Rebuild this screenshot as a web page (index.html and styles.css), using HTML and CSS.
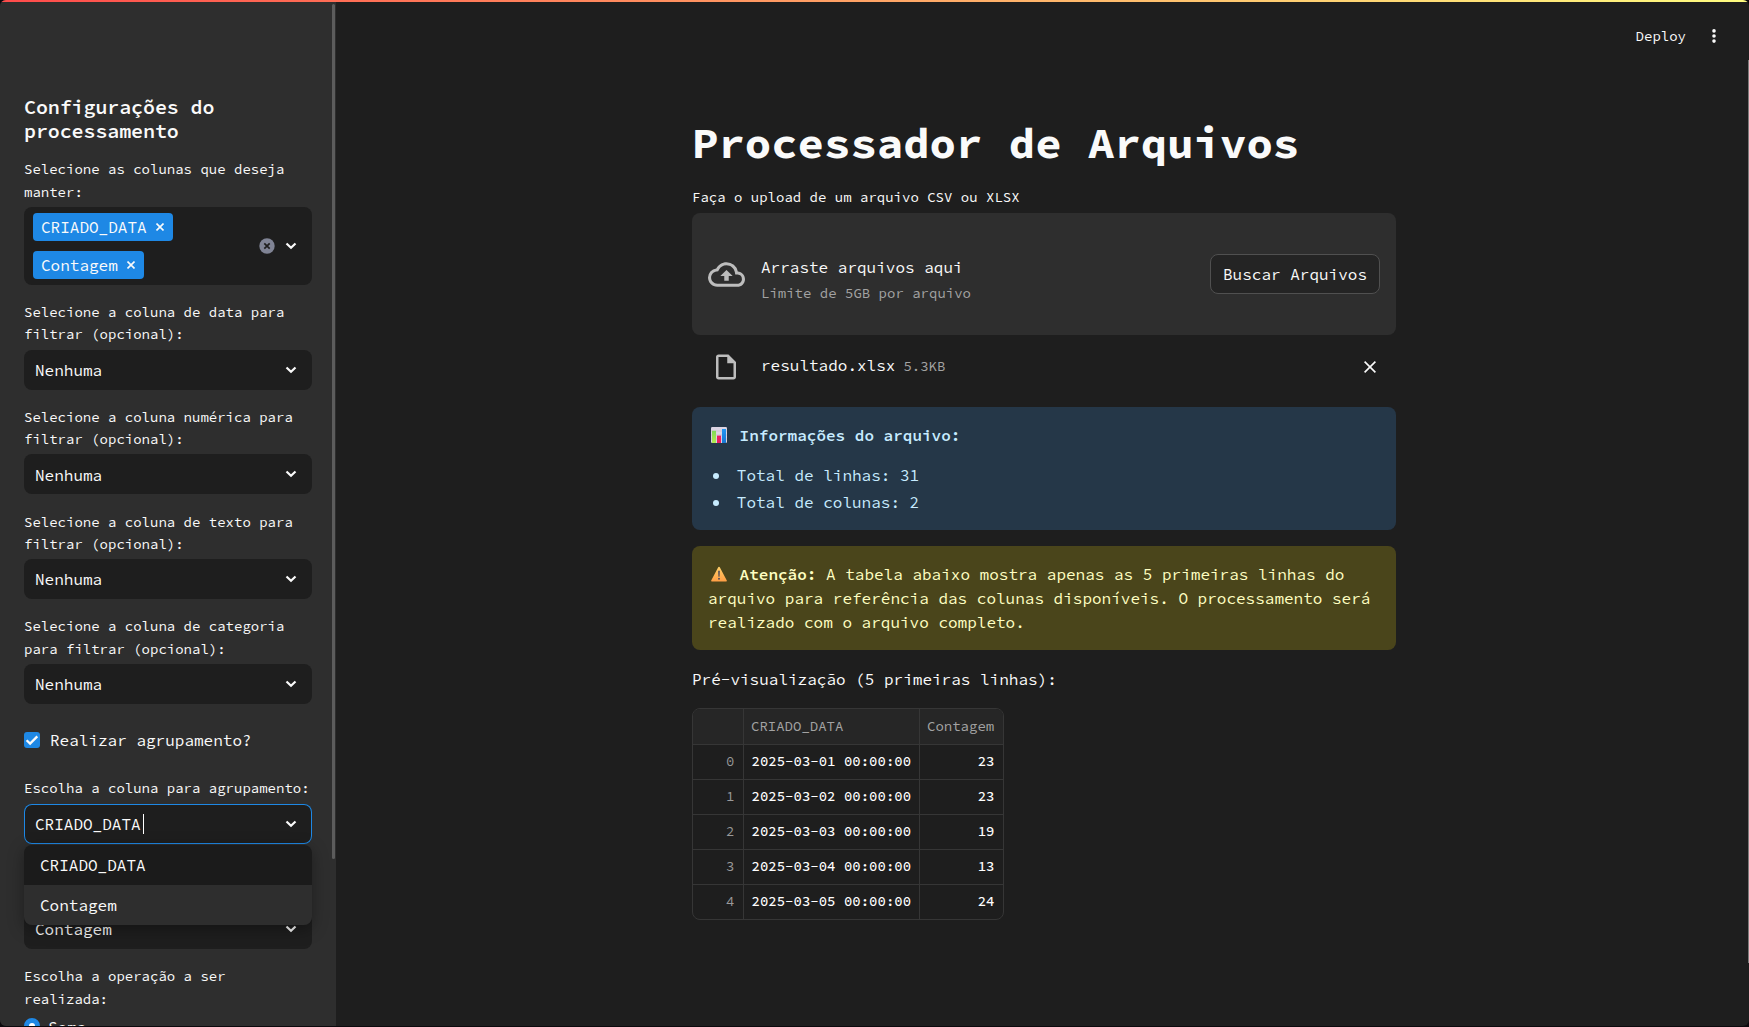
FILE: index.html
```html
<!DOCTYPE html>
<html lang="pt-BR">
<head>
<meta charset="utf-8">
<title>Processador de Arquivos</title>
<link rel="stylesheet" href="styles.css">
</head>
<body>
<svg width="0" height="0" class="defs">
  <symbol id="chevron" viewBox="0 0 12 8"><path d="M1.5 1.5 6 5.8 10.5 1.5" fill="none" stroke="currentColor" stroke-width="2.2"/></symbol>
  <symbol id="cross" viewBox="0 0 8 8"><path d="M.5.5 7.5 7.5M7.5.5.5 7.5" fill="none" stroke="currentColor" stroke-width="1.6"/></symbol>
</svg>
<div class="app">
  <div class="decoration"></div>
  <aside class="sidebar">
    <div class="side-scroll"></div>
    <h2>Configurações do processamento</h2>
    <div class="field">
      <label>Selecione as colunas que deseja manter:</label>
      <div class="multi">
        <div class="tags">
          <span class="tag">CRIADO_DATA<svg><use href="#cross"/></svg></span>
          <span class="tag">Contagem<svg><use href="#cross"/></svg></span>
        </div>
        <svg class="clear" viewBox="0 0 16 16"><circle cx="8" cy="8" r="7.7" fill="#808495"/><path d="M5.3 5.3l5.4 5.4M10.7 5.3l-5.4 5.4" stroke="#1e1e1e" stroke-width="1.7"/></svg>
        <svg class="chev"><use href="#chevron"/></svg>
      </div>
    </div>
    <div class="field"><label>Selecione a coluna de data para filtrar (opcional):</label>
      <div class="select"><span>Nenhuma</span><svg class="chev"><use href="#chevron"/></svg></div></div>
    <div class="field"><label>Selecione a coluna numérica para filtrar (opcional):</label>
      <div class="select"><span>Nenhuma</span><svg class="chev"><use href="#chevron"/></svg></div></div>
    <div class="field"><label>Selecione a coluna de texto para filtrar (opcional):</label>
      <div class="select"><span>Nenhuma</span><svg class="chev"><use href="#chevron"/></svg></div></div>
    <div class="field"><label>Selecione a coluna de categoria para filtrar (opcional):</label>
      <div class="select"><span>Nenhuma</span><svg class="chev"><use href="#chevron"/></svg></div></div>
    <div class="check">
      <svg class="box" viewBox="0 0 16 16"><rect width="16" height="16" rx="3" fill="#1e88e5"/><path d="M2.6 8.2 6.1 11.6 13.3 4.4" fill="none" stroke="#fafafa" stroke-width="2.3"/></svg>
      <span>Realizar agrupamento?</span>
    </div>
    <div class="field"><label>Escolha a coluna para agrupamento:</label>
      <div class="select focused"><span>CRIADO_DATA</span><i class="caret"></i><svg class="chev"><use href="#chevron"/></svg>
        <ul class="menu"><li>CRIADO_DATA</li><li class="active">Contagem</li></ul>
      </div></div>
    <div class="field"><label class="two-lines"></label>
      <div class="select"><span>Contagem</span><svg class="chev"><use href="#chevron"/></svg></div></div>
    <div class="field"><label>Escolha a operação a ser realizada:</label>
      <div class="radio"><i></i><span>Soma</span></div></div>
  </aside>
  <main class="main">
    <header class="toolbar"><span>Deploy</span>
      <svg class="dots" viewBox="0 0 16 16"><circle cx="8" cy="2.9" r="1.8"/><circle cx="8" cy="8" r="1.8"/><circle cx="8" cy="13.1" r="1.8"/></svg>
    </header>
    <div class="page-scroll"></div>
    <div class="content">
      <h1>Processador de Arquivos</h1>
      <label>Faça o upload de um arquivo CSV ou XLSX</label>
      <div class="dropzone">
        <svg class="cloud" viewBox="0 0 24 24"><path d="M19.35 10.04A7.49 7.49 0 0 0 12 4C9.11 4 6.6 5.64 5.35 8.04A5.994 5.994 0 0 0 0 14c0 3.31 2.69 6 6 6h13c2.76 0 5-2.24 5-5 0-2.64-2.05-4.78-4.65-4.96zM19 18H6c-2.21 0-4-1.79-4-4 0-2.05 1.53-3.76 3.56-3.97l1.07-.11.5-.95A5.469 5.469 0 0 1 12 6c2.62 0 4.88 1.86 5.39 4.43l.3 1.5 1.53.11A2.98 2.98 0 0 1 22 15c0 1.65-1.35 3-3 3zM8 13h2.55v3h2.9v-3H16l-4-4-4 4z"/></svg>
        <div class="drop-text"><span>Arraste arquivos aqui</span><small>Limite de 5GB por arquivo</small></div>
        <button>Buscar Arquivos</button>
      </div>
      <div class="file">
        <svg class="doc" viewBox="0 0 24 24"><path d="M14 2H6c-1.1 0-1.99.9-1.99 2L4 20c0 1.1.89 2 1.99 2H18c1.1 0 2-.9 2-2V8l-6-6zM6 20V4h7v5h5v11H6z"/></svg>
        <div class="file-name"><span>resultado.xlsx</span><small>5.3KB</small></div>
        <svg class="remove" viewBox="0 0 12 12"><path d="M.6.6 11.4 11.4M11.4.6.6 11.4" stroke="#fafafa" stroke-width="1.6"/></svg>
      </div>
      <section class="alert info">
        <p><svg class="emoji" viewBox="0 0 16 16"><defs><linearGradient id="g" x2="0" y2="1"><stop stop-color="#7ed957"/><stop offset="1" stop-color="#b4ec51"/></linearGradient><linearGradient id="b" x2="0" y2="1"><stop stop-color="#2196f3"/><stop offset="1" stop-color="#1976d2"/></linearGradient></defs><rect width="16" height="16" rx="1.2" fill="#dcd5e4"/><path d="M0 4h16M0 8h16M0 12h16" stroke="#c5bdcf" stroke-width=".7"/><rect x="1" y="3.8" width="4" height="12.2" fill="url(#g)"/><rect x="6" y="8.6" width="4" height="7.4" fill="#e91e63"/><rect x="11" y="2" width="4" height="14" fill="url(#b)"/></svg><b> Informações do arquivo:</b></p>
        <ul><li>Total de linhas: 31</li><li>Total de colunas: 2</li></ul>
      </section>
      <section class="alert warn">
        <p><svg class="emoji" viewBox="0 0 16 16"><defs><linearGradient id="o" x2="0" y2="1"><stop stop-color="#ffd069"/><stop offset="1" stop-color="#ff9f45"/></linearGradient></defs><path d="M8 .7c.4 0 .6.2.8.5l7 13.2c.3.6 0 1-.6 1H.8c-.6 0-.9-.4-.6-1l7-13.2c.2-.3.4-.5.8-.5z" fill="url(#o)"/><path d="M7.1 4.7h1.8l-.3 6H7.4z" fill="#55505c"/><circle cx="8" cy="12.7" r="1" fill="#55505c"/></svg><b> Atenção:</b> A tabela abaixo mostra apenas as 5 primeiras linhas do arquivo para referência das colunas disponíveis. O processamento será realizado com o arquivo completo.</p>
      </section>
      <p class="preview">Pré-visualização (5 primeiras linhas):</p>
      <table>
        <thead><tr><th></th><th>CRIADO_DATA</th><th>Contagem</th></tr></thead>
        <tbody>
          <tr><td>0</td><td>2025-03-01 00:00:00</td><td>23</td></tr>
          <tr><td>1</td><td>2025-03-02 00:00:00</td><td>23</td></tr>
          <tr><td>2</td><td>2025-03-03 00:00:00</td><td>19</td></tr>
          <tr><td>3</td><td>2025-03-04 00:00:00</td><td>13</td></tr>
          <tr><td>4</td><td>2025-03-05 00:00:00</td><td>24</td></tr>
        </tbody>
      </table>
    </div>
  </main>
</div>
</body>
</html>
```
FILE: styles.css
```css
* { box-sizing: border-box; }
html { background: #0c090d; }
body {
  margin: 0;
  color: #fafafa;
  font: 16px/24px "Source Code Pro", "Noto Sans Mono", "DejaVu Sans Mono", monospace;
}
h1, h2, p, ul { margin: 0; padding: 0; }
ul { list-style: none; }
svg { display: block; flex: none; }
.defs { position: absolute; }

.app {
  position: relative;
  display: flex;
  width: 1749px;
  height: 1026px;
  overflow: hidden;
  background: #1e1e1e;
  border-radius: 6px;
}
.decoration {
  position: absolute;
  inset: 0 0 auto;
  z-index: 5;
  height: 2px;
  background: linear-gradient(90deg, #ff4b4b, #fffd80);
}

/* Sidebar */
.sidebar {
  position: relative;
  flex: none;
  display: flex;
  flex-direction: column;
  gap: 16px;
  width: 336px;
  height: 1026px;
  padding: 95.2px 24px 0;
  overflow: hidden;
  background: #2e2e2e;
}
.sidebar > * { flex: none; }
.side-scroll {
  position: absolute;
  top: 4px;
  right: 1px;
  width: 3px;
  height: 855px;
  background: #5c5c5c;
  border-radius: 2px;
}
h2 { margin-bottom: -1px; font-size: 20px; line-height: 24px; font-weight: 600; letter-spacing: -.1px; }
label { display: block; margin-bottom: 4px; font-size: 14px; line-height: 22.4px; }
.two-lines { height: 45.4px; }
.select {
  position: relative;
  display: flex;
  align-items: center;
  height: 40px;
  margin: -.2px 0 .2px;
  padding: 0 15px 0 11px;
  background: #1e1e1e;
  border-radius: 8px;
}
.select > span { padding-top: .4px; }
.chev { width: 12px; height: 8px; margin-left: auto; }
.focused { box-shadow: inset 0 0 0 1px #1e88e5; }
.caret { width: 1px; height: 20px; margin-left: 2.5px; background: #fff; }
.multi {
  display: flex;
  align-items: center;
  height: 78px;
  padding: 0 15px 0 9px;
  background: #1e1e1e;
  border-radius: 8px;
}
.tags { display: flex; flex: 1; flex-direction: column; align-items: flex-start; gap: 10px; }
.tag {
  display: flex;
  align-items: center;
  gap: 9.4px;
  height: 28px;
  padding: 0 8.7px 0 8px;
  background: #1e88e5;
  border-radius: 4px;
}
.tag svg { width: 8px; height: 8px; }
.clear { width: 16px; height: 16px; margin-right: 10px; }
.check { display: flex; gap: 10px; height: 41.2px; padding-top: 11.6px; }
.check .box { width: 16px; height: 16px; }
.check span { margin-top: -3.5px; }
.menu {
  position: absolute;
  top: 41px;
  left: 0;
  right: 0;
  z-index: 2;
  overflow: hidden;
  background: #1b1b1b;
  border-radius: 8px;
  box-shadow: 0 4px 16px rgba(0, 0, 0, .35);
}
.menu li { height: 40px; padding-left: 16px; line-height: 41px; }
.menu .active { background: #2e2e2e; }
.radio { display: flex; gap: 8px; margin-top: 8px; }
.radio i { width: 16px; height: 16px; border: 5px solid #1e88e5; border-radius: 50%; background: #fff; }
.radio span { margin-top: -3px; }

/* Main area */
.main { position: relative; flex: 1; }
.toolbar {
  display: flex;
  align-items: center;
  justify-content: flex-end;
  gap: 20px;
  height: 72px;
  padding-right: 27px;
  font-size: 14px;
}
.dots { width: 16px; height: 16px; fill: #fafafa; }
.page-scroll { position: absolute; top: 60px; right: 0; width: 1px; height: 903px; background: #7b7b7b; }
.content { width: 704px; margin-left: 356px; padding-top: 45.2px; }
h1 { margin-bottom: 16.2px; font-size: 44px; line-height: 52.8px; font-weight: 700; }
small { color: #a3a3a3; font-size: 14px; line-height: 20px; }
.dropzone {
  display: flex;
  align-items: center;
  height: 122px;
  padding: 0 16px;
  background: #2e2e2e;
  border-radius: 8px;
}
.cloud { width: 37px; height: 37px; margin: 1px 16px 0 0; fill: #bdbdbd; }
.drop-text { display: flex; flex: 1; flex-direction: column; gap: 4px; padding-top: 10px; }
button {
  height: 40px;
  padding: 0 12px;
  color: inherit;
  font: inherit;
  background: #242424;
  border: 1px solid #505050;
  border-radius: 8px;
}
.file { display: flex; align-items: center; height: 64px; margin-bottom: 8px; padding: 0 20px 0 19.2px; }
.doc { width: 30px; height: 30px; margin: 1px 19.8px 0 0; fill: #bdbdbd; }
.file-name { display: flex; flex: 1; align-items: baseline; gap: 8px; margin-top: -4px; }
.remove { width: 12px; height: 12px; }
.alert { padding: 16px; border-radius: 8px; }
.alert b { font-weight: 600; }
.emoji { display: inline-block; width: 16px; height: 16px; margin: 0 3px 0 3px; vertical-align: -2.5px; }
.info { height: 123px; margin-bottom: 16px; color: #c7ebff; background: #253748; }
.info ul { margin-top: 16px; }
.info li { display: flex; align-items: center; height: 24px; margin-bottom: 3px; }
.info li::before { content: ""; width: 6px; height: 6px; margin: 2px 17.4px 0 5.4px; background: currentColor; border-radius: 50%; }
.warn { color: #ffffc2; background: #4a451b; }
.preview { margin-top: 17px; margin-bottom: 17px; }
table {
  width: 312px;
  table-layout: fixed;
  border: 1px solid #363636;
  border-collapse: separate;
  border-spacing: 0;
  border-radius: 8px;
  overflow: hidden;
  font-size: 14px;
  line-height: 20px;
}
th, td { height: 35px; padding: 0 8.5px 0 7.5px; border: 0 solid #363636; border-width: 0 1px 1px 0; white-space: nowrap; }
th { height: 36px; padding-left: 7px; color: #a3a3a3; font-weight: 400; text-align: left; background: #262626; }
td { padding-bottom: 2px; color: #fff; font-weight: 500; }
th:nth-child(1) { width: 51px; }
th:nth-child(2) { width: 176px; }
td:first-child { color: #999; font-weight: 400; text-align: right; }
td:last-child { text-align: right; }
th:last-child, td:last-child { border-right: 0; }
tr:last-child td { height: 34px; border-bottom: 0; }
thead tr:last-child th { border-bottom-width: 1px; }
```
